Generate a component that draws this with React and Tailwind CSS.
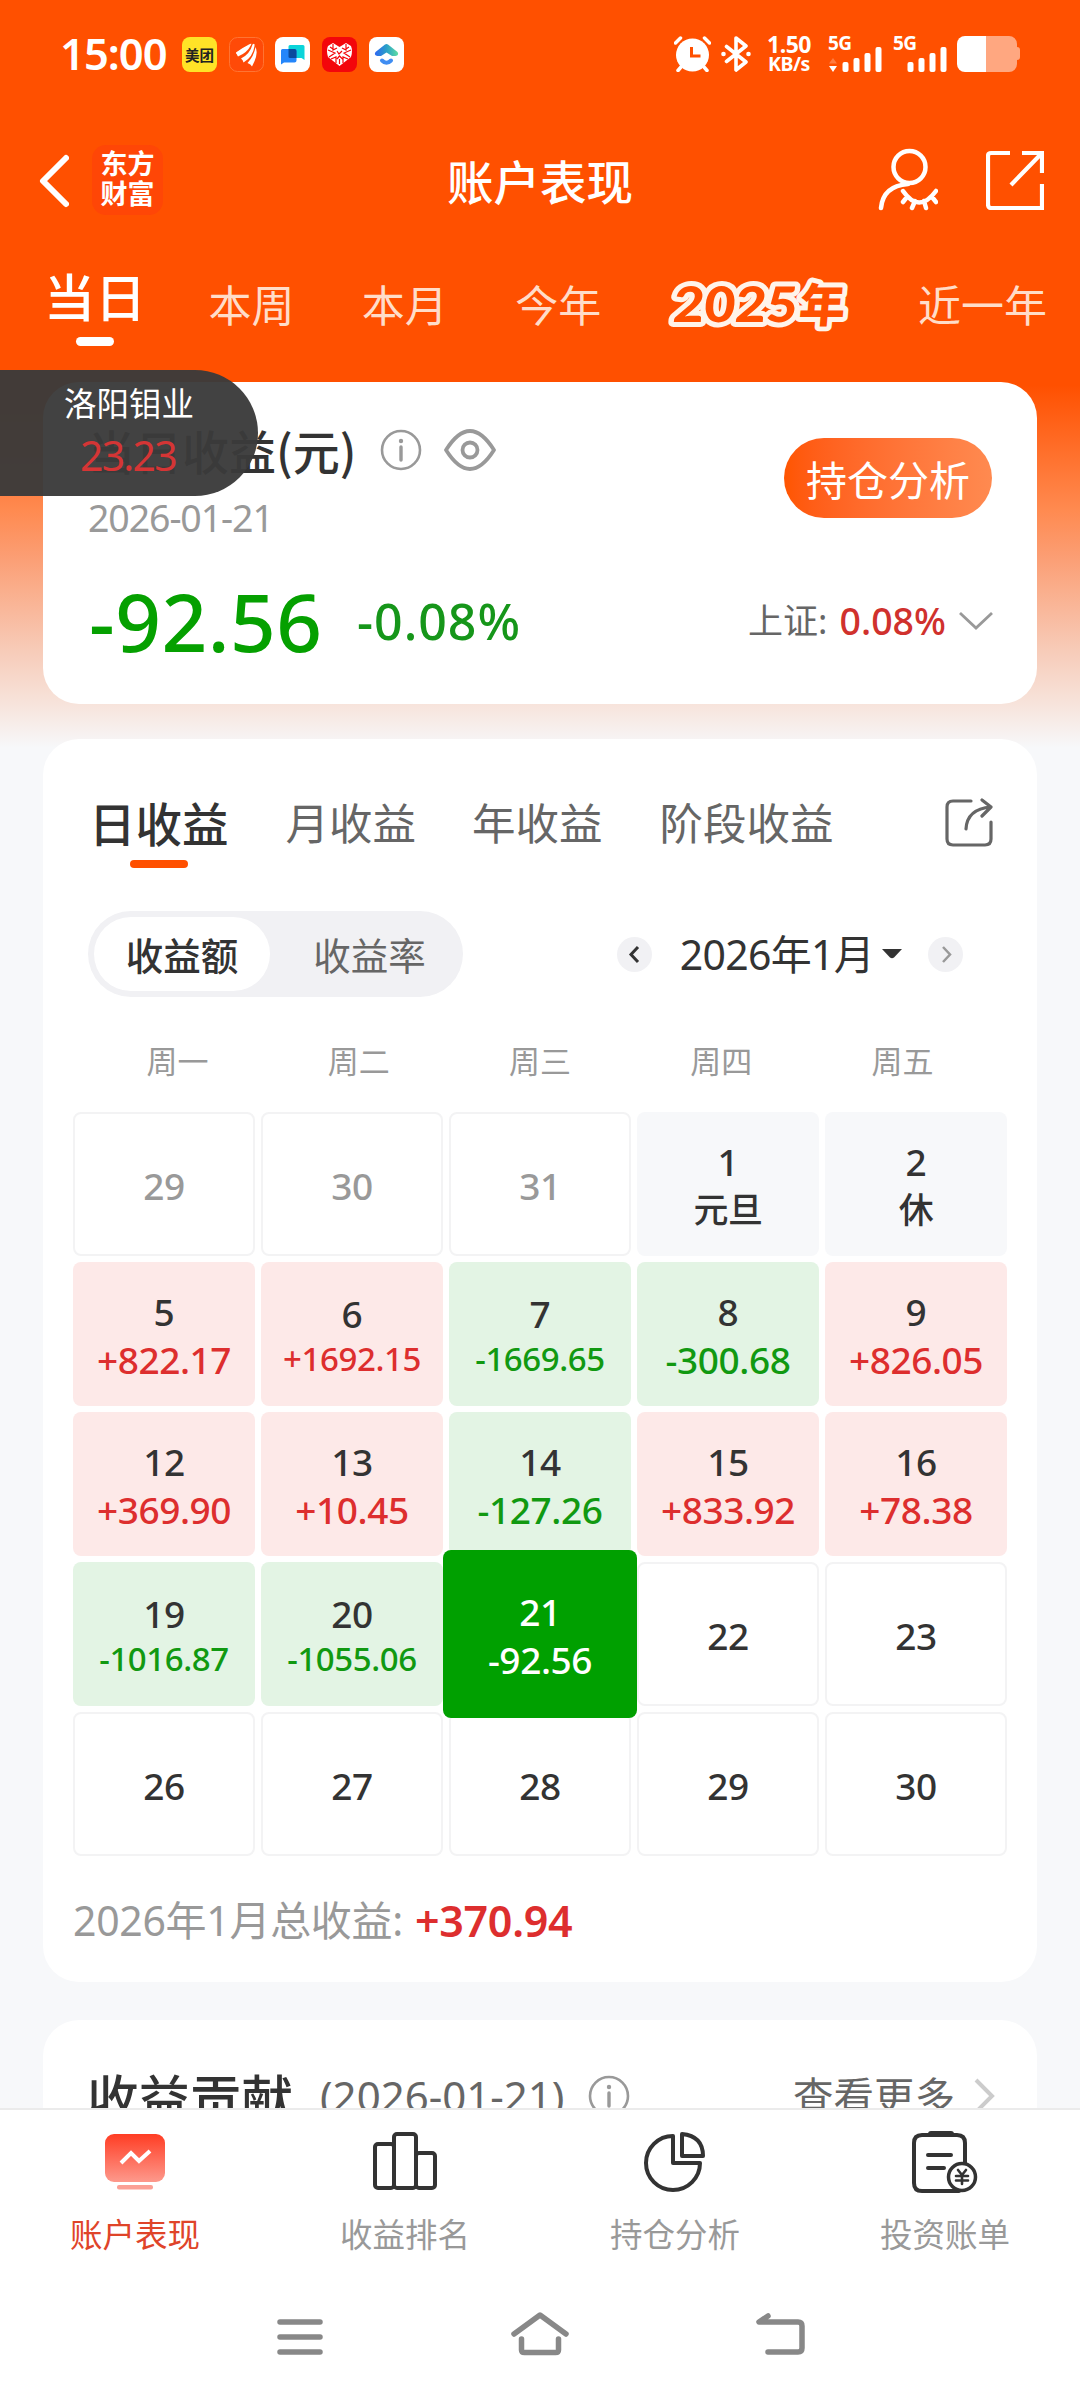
import { useState } from "react";

const days = [
  { day: 29, type: "muted" },
  { day: 30, type: "muted" },
  { day: 31, type: "muted" },
  { day: 1, type: "holiday", note: "元旦" },
  { day: 2, type: "holiday", note: "休" },
  { day: 5, type: "up", note: "+822.17" },
  { day: 6, type: "up", note: "+1692.15" },
  { day: 7, type: "down", note: "-1669.65" },
  { day: 8, type: "down", note: "-300.68" },
  { day: 9, type: "up", note: "+826.05" },
  { day: 12, type: "up", note: "+369.90" },
  { day: 13, type: "up", note: "+10.45" },
  { day: 14, type: "down", note: "-127.26" },
  { day: 15, type: "up", note: "+833.92" },
  { day: 16, type: "up", note: "+78.38" },
  { day: 19, type: "down", note: "-1016.87" },
  { day: 20, type: "down", note: "-1055.06" },
  { day: 21, type: "active", note: "-92.56" },
  { day: 22, type: "empty" },
  { day: 23, type: "empty" },
  { day: 26, type: "empty" },
  { day: 27, type: "empty" },
  { day: 28, type: "empty" },
  { day: 29, type: "empty" },
  { day: 30, type: "empty" },
];

const cellStyles = {
  muted: "border-2 border-[#f3f3f4] text-[#999]",
  holiday: "bg-[#f7f8fa] text-[#333]",
  up: "bg-[#fde9e8] text-[#333]",
  down: "bg-[#e3f4e4] text-[#333]",
  active: "bg-[#00a000] text-white z-10 -mx-[6px] -my-3",
  empty: "border-2 border-[#f3f3f4] text-[#333]",
};

const noteStyles = {
  holiday: "text-[#333]",
  up: "text-[#dd2e2e]",
  down: "text-[#119911]",
  active: "text-white",
};

const InfoIcon = () => (
  <svg width="42" height="42" viewBox="0 0 42 42" fill="none" stroke="#999" strokeWidth="2.6">
    <circle cx="21" cy="21" r="19" />
    <circle cx="21" cy="12" r="2.2" fill="#999" stroke="none" />
    <path d="M21 18v13" strokeWidth="3.4" strokeLinecap="round" />
  </svg>
);

const Signal = ({ arrows }) => (
  <div className="relative w-[55px] h-9">
    <span className="absolute left-0 top-0 text-[19px] leading-[15px] font-bold tracking-[-0.5px]">5G</span>
    <svg className="absolute inset-0" width="55" height="36" fill="#fff">
      {arrows && (
        <>
          <path d="M1 27.5L5 22l4 5.500z" opacity=".25" />
          <path d="M1 30h8l-4 6z" />
        </>
      )}
      <rect x="14.500" y="26" width="6" height="10" rx="2" />
      <rect x="25.500" y="22" width="6" height="14" rx="2" />
      <rect x="36.500" y="17" width="6" height="19" rx="2" />
      <rect x="47.500" y="11" width="6" height="25" rx="2" />
    </svg>
  </div>
);

const StatusBar = () => (
  <div className="flex items-center shrink-0 h-[72px] pt-9 pl-[60px] pr-[60px] text-white">
    <span className="w-[122px] text-[43.500px] leading-[34px] -mt-[2px] font-semibold tracking-[-1px] font-['Noto_Sans']">15:00</span>
    <div className="flex gap-[11.700px]">
      <div className="size-[35px] rounded-[8px] bg-[#ffe327] text-[#222] text-[14.500px] leading-[35px] font-bold text-center">美团</div>
      <svg width="35" height="35" viewBox="0 0 35 35">
        <rect x=".5" y=".5" width="34" height="34" rx="8" fill="#ff4a08" stroke="#ff7433" />
        <g fill="#fff">
          <path d="M7 17C13 14 18 11 23 6.500Q18 9 7.500 15.500Z" />
          <path d="M7 15.500Q13 11 20 7.500Q23 6 22 8Q18 16 9 19.500Q8 18 7 15.500Z" />
          <path d="M12 21.500Q21 17 23.500 7.500Q26 5.500 25.500 9Q24 20 14.500 25.500Q14 23 12 21.500Z" />
          <path d="M18.500 26Q25 19 26.500 10Q30 17 23 29.500Q22 27 18.500 26Z" />
        </g>
      </svg>
      <svg width="35" height="35" viewBox="0 0 35 35">
        <rect width="35" height="35" rx="8" fill="#fff" />
        <path d="M15 8h13a1.500 1.500 0 0 1 1.500 1.500V23l-3-2H15a1.500 1.500 0 0 1-1.500-1.500v-10A1.500 1.500 0 0 1 15 8Z" fill="#0bd4da" />
        <path d="M7.500 12h12A2 2 0 0 1 21.500 14v9.500a2 2 0 0 1-2 2H9l-3 2V13.500A1.500 1.500 0 0 1 7.500 12Z" fill="#2486fb" />
        <path d="M13.500 12h6a2 2 0 0 1 2 2v7H15a1.500 1.500 0 0 1-1.500-1.500Z" fill="#0a4a9e" />
      </svg>
      <svg width="35" height="35" viewBox="0 0 35 35">
        <rect width="35" height="35" rx="8" fill="#f3060b" />
        <path d="M17.500 29L6 20Q4 13 6 9L11 6l6.500 4L24 6l5 3q2 5 0 11Z" fill="#fff" />
        <path d="M6 13l7 3-6 4M29 13l-7 3 6 4M11 7v6l4-2M24 7v6l-4-2M9 22l5-2v6M26 22l-5-2v6M15 14l2 3 3-3M15 22l2.500-3 3 3M17.500 22v5M8 10l3 2M27 10l-3 2" stroke="#f3060b" strokeWidth="1.200" fill="none" />
      </svg>
      <svg width="35" height="35" viewBox="0 0 35 35">
        <defs>
          <linearGradient id="roof" gradientUnits="userSpaceOnUse" x1="5" y1="0" x2="30" y2="0">
            <stop offset="0" stopColor="#2f62f5" />
            <stop offset=".5" stopColor="#2aa0c8" />
            <stop offset="1" stopColor="#62e2a0" />
          </linearGradient>
        </defs>
        <rect width="35" height="35" rx="8" fill="#fff" />
        <path d="M16 7.500q1.500-1 3 0L28.500 15q2 3-2 4h-3.500l-5.500-3.500L12 19H8.500q-4-1-2-4Z" fill="url(#roof)" />
        <path d="M13 23.500q4.500 4.500 9 0" stroke="#3f8df2" strokeWidth="4" strokeLinecap="round" fill="none" />
      </svg>
    </div>
    <div className="flex ml-auto h-9">
      <svg width="37" height="36" viewBox="0 0 37 36">
        <circle cx="18.500" cy="19" r="16.500" fill="#fff" />
        <path d="M1.500 7l5-5M35.500 7l-5-5" stroke="#fff" strokeWidth="3.500" strokeLinecap="round" />
        <path d="M7 31l-3 3.500M30 31l3 3.500" stroke="#fff" strokeWidth="3.500" strokeLinecap="round" />
        <path d="M17.500 11v9h9" stroke="#ff5000" strokeWidth="3" fill="none" />
      </svg>
      <svg className="ml-[10px]" width="30" height="36" viewBox="0 0 30 36" fill="none" stroke="#fff" strokeWidth="3.600" strokeLinejoin="round" strokeLinecap="round">
        <path d="M5.500 10.500L25 26l-10 8V2l10 8L5.500 25.500" />
        <circle cx="2.500" cy="18" r="2.300" fill="#fff" stroke="none" />
        <circle cx="27.500" cy="18" r="2.300" fill="#fff" stroke="none" />
      </svg>
      <div className="ml-[15px] w-[46px] text-center leading-[20px] font-bold font-['Noto_Sans']">
        <p className="text-[23px] -mt-[2px] tracking-[-0.5px]">1.50</p>
        <p className="text-[19.500px] tracking-[-0.500px]">KB/s</p>
      </div>
      <div className="flex ml-[16px] gap-[10px] font-['Noto_Sans']">
        <Signal arrows />
        <Signal />
      </div>
      <svg className="ml-[9px]" width="63" height="36" viewBox="0 0 63 36">
        <path d="M29 0h23a8 8 0 0 1 8 8v3q3 0 3 3v7q0 3-3 3v4a8 8 0 0 1-8 8H29z" fill="#ffa780" />
        <path d="M8 0h21v36H8a8 8 0 0 1-8-8V8a8 8 0 0 1 8-8z" fill="#fff" />
      </svg>
    </div>
  </div>
);

const Header = () => (
  <div className="relative flex items-center shrink-0 h-[70px] mt-[73px] pl-[39px] pr-9 text-white">
    <svg className="mt-[2px]" width="30" height="54" viewBox="0 0 30 54" fill="none" stroke="#fff" strokeWidth="6" strokeLinecap="round" strokeLinejoin="round">
      <path d="M27 4L4 27l23 23" />
    </svg>
    <div className="ml-[23px] w-[71px] h-[70px] rounded-[14px] bg-[#ff4606] text-[27px] leading-[30px] pt-[3px] text-center font-bold">
      <p>东方</p>
      <p>财富</p>
    </div>
    <h1 className="absolute inset-x-0 top-0 text-center text-[46.500px] leading-[69px] font-medium">账户表现</h1>
    <svg className="ml-auto" width="60" height="64" viewBox="0 0 60 64" fill="none" stroke="#fff" strokeWidth="4.500" strokeLinecap="round">
      <circle cx="31.500" cy="19" r="16" />
      <path d="M30 36Q5 38 3 60M25 43q16 23 33 0M29 49l-4 5M37 53l-3 7M46 53l2 7M54 49l4 5" />
    </svg>
    <svg className="ml-12" width="58" height="60" viewBox="0 0 58 60" fill="none" stroke="#fff" strokeWidth="4.200">
      <path d="M24 3H5q-3 0-3 3v48q0 4 3 4h51V34M36 3h20v20M55 4L25 35" />
    </svg>
  </div>
);

const periods = ["当日", "本周", "本月", "今年", "2025年", "近一年"];

const PeriodTabs = () => (
  <div className="flex items-start justify-between shrink-0 h-[112px] mt-[55px] pl-[44px] pr-[33px] text-[43px] leading-[67px] text-[#ffddc9]">
    {periods.map((p, i) => {
      if (i === 0) {
        return (
          <div key={p} className="flex flex-col items-center -mr-[5px] text-white text-[51px] leading-[50px] font-medium">
            {p}
            <span className="w-[38px] h-[9px] mt-[17px] rounded-full bg-white" />
          </div>
        );
      }
      if (p === "2025年") {
        return (
          <svg key={p} className="mt-[6px] -mx-[2px] overflow-visible" width="186" height="60" viewBox="0 0 186 60">
            <g transform="skewX(-5)" fontWeight="900" fill="#ff5000" stroke="#fff4ea" strokeWidth="10" strokeLinejoin="round" paintOrder="stroke">
              <text x="9" y="46" textLength="124" lengthAdjust="spacingAndGlyphs" fontSize="49" className="font-[Lato]">2025</text>
              <text x="135" y="46" fontSize="46" className="font-['Noto_Sans_CJK_SC',sans-serif]">年</text>
            </g>
          </svg>
        );
      }
      return <span key={p}>{p}</span>;
    })}
  </div>
);

const Summary = () => (
  <div className="flex flex-col shrink-0 h-[322px] mx-[43px] rounded-[36px] bg-white">
    <div className="flex pl-[45px] pr-[45px] h-[176px] pt-11">
      <div>
        <div className="flex items-center h-[48px]">
          <h2 className="text-[47px] leading-[48px] font-medium text-[#333] whitespace-nowrap">当日收益(元)</h2>
          <span className="ml-[24px] -mt-px"><InfoIcon /></span>
          <svg className="ml-[22px]" width="52" height="42" viewBox="0 0 52 42" fill="none" stroke="#999" strokeWidth="3.800">
            <path d="M2 21Q14 2 26 2t24 19Q38 40 26 40T2 21Z" strokeLinejoin="round" />
            <circle cx="26" cy="21" r="7.500" />
          </svg>
        </div>
        <p className="mt-[24px] text-[37.500px] leading-[40px] text-[#999] font-['Noto_Sans'] tracking-[-1.100px]">2026-01-21</p>
      </div>
      <button className="ml-auto mt-3 w-[208px] h-20 rounded-full bg-linear-to-r from-[#ff5500] to-[#ff8a50] text-white text-[41px] leading-[79px]">持仓分析</button>
    </div>
    <div className="flex items-center h-[126px] pl-[46px] pr-[43px] font-['Noto_Sans','Noto_Sans_CJK_SC',sans-serif]">
      <span className="text-[80px] leading-[100px] font-medium text-[#05a000] tracking-[0.500px] w-[268px]">-92.56</span>
      <span className="text-[50px] font-medium text-[#16961a] tracking-[1px]">-0.08%</span>
      <span className="ml-auto text-[35px] text-[#666]">上证:</span>
      <span className="ml-3 text-[37.500px] font-medium text-[#d0312d]">0.08%</span>
      <svg className="ml-3" width="36" height="20" viewBox="0 0 36 20" fill="none" stroke="#999" strokeWidth="2.800">
        <path d="M2 2l16 15L34 2" />
      </svg>
    </div>
  </div>
);

const Cell = ({ item }) => {
  const small = item.note && item.note.length > 7;
  return (
    <div className={`relative flex flex-col items-center justify-center rounded-[8px] pt-[3px] text-[37px] leading-[48px] font-medium ${cellStyles[item.type]}`}>
      <span className={small ? "leading-[44px] pt-[3px]" : ""}>{item.day}</span>
      {item.note && (
        <span className={`${noteStyles[item.type]} ${small ? "text-[33px] leading-[46px]" : item.type === "holiday" ? "text-[35px]" : ""}`}>
          {item.note}
        </span>
      )}
    </div>
  );
};

const Calendar = () => {
  const [mode, setMode] = useState("amount");

  return (
    <div className="shrink-0 h-[1243px] mt-[35px] mx-[43px] rounded-[36px] bg-white">
      {/* Range tabs */}
      <div className="flex items-start h-[172px] pt-[53px] pl-[46px] pr-[43px] text-[43.500px] leading-[60px] text-[#666]">
        <div className="flex flex-col items-center text-[46.500px] font-medium text-[#333]">
          日收益
          <span className="w-[58px] h-2 mt-[8px] rounded-full bg-[#ff5000]" />
        </div>
        <span className="ml-[57px]">月收益</span>
        <span className="ml-[56px]">年收益</span>
        <span className="ml-[57px]">阶段收益</span>
        <svg className="ml-auto mt-[6px]" width="49" height="50" viewBox="0 0 49 50" fill="none" stroke="#666" strokeWidth="3.200" strokeLinecap="round" strokeLinejoin="round">
          <path d="M26 3H8Q2 3 2 9v32q0 6 6 6h32q6 0 6-6V24M21 31Q22 11 46 9M37 2l9 7-9 9" />
        </svg>
      </div>

      {/* Mode switch + month picker */}
      <div className="flex items-center h-[86px] pl-[45px] pr-[74px]">
        <div className="flex items-center w-[375px] h-[86px] p-[6px] rounded-full bg-[#f1f1f4] text-[37.500px] text-[#666]">
          <button onClick={() => setMode("amount")} className={`w-[176px] h-[74px] rounded-full ${mode === "amount" ? "bg-white text-[#333] font-medium" : ""}`}>
            收益额
          </button>
          <button onClick={() => setMode("rate")} className={`flex-1 pl-3 h-[74px] rounded-full ${mode === "rate" ? "bg-white text-[#333] font-medium" : ""}`}>
            收益率
          </button>
        </div>
        <svg className="ml-auto" width="35" height="35" viewBox="0 0 35 35" fill="none">
          <circle cx="17.500" cy="17.500" r="17.500" fill="#f1f1f4" />
          <path d="M21 10l-7 7.500 7 7.500" stroke="#333" strokeWidth="3" />
        </svg>
        <span className="ml-7 mt-[2px] text-[41px] text-[#333] tracking-[-0.700px] font-['Noto_Sans','Noto_Sans_CJK_SC',sans-serif]">2026年1月</span>
        <svg className="ml-[8px]" width="20" height="10" viewBox="0 0 20 10" fill="#333">
          <path d="M0 0h20l-8 8.500q-2 1.500-4 0z" />
        </svg>
        <svg className="ml-[26px]" width="35" height="35" viewBox="0 0 35 35" fill="none">
          <circle cx="17.500" cy="17.500" r="17.500" fill="#f1f1f4" />
          <path d="M15 10l7 7.500-7 7.500" stroke="#999" strokeWidth="2.500" />
        </svg>
      </div>

      <div className="grid grid-cols-5 h-[115px] px-[44px] pt-[33px] text-center text-[31px] leading-[60px] text-[#999]">
        <span>周一</span>
        <span>周二</span>
        <span>周三</span>
        <span>周四</span>
        <span>周五</span>
      </div>

      <div className="grid grid-cols-5 auto-rows-[144px] gap-[6px] mx-[30px] font-['Noto_Sans','Noto_Sans_CJK_SC',sans-serif] tracking-[-0.400px]">
        {days.map((item, i) => (
          <Cell key={i} item={item} />
        ))}
      </div>

      <div className="flex items-center pl-[30px] mt-[35px] h-[60px] text-[41px] text-[#999] font-['Noto_Sans','Noto_Sans_CJK_SC',sans-serif]">
        <span className="tracking-[-0.300px]">2026年1月总收益:</span>
        <span className="ml-3 font-semibold text-[#dd2e2e] text-[43px] tracking-[-0.300px]">+370.94</span>
      </div>
    </div>
  );
};

const Contribution = () => (
  <div className="flex items-center shrink-0 mt-[38px] mx-[43px] rounded-t-[36px] bg-white h-[151px] pl-[44px] pr-[40px]">
    <h2 className="text-[51.500px] font-medium text-[#333]">收益贡献</h2>
    <span className="ml-[27px] text-[42px] text-[#666] font-['Noto_Sans']">(2026-01-21)</span>
    <span className="ml-6"><InfoIcon /></span>
    <span className="ml-auto text-[40.500px] text-[#666]">查看更多</span>
    <svg className="ml-[18px]" width="24" height="40" viewBox="0 0 24 40" fill="none" stroke="#ccc" strokeWidth="4">
      <path d="M3 4l16 16L3 36" />
    </svg>
  </div>
);

const navItems = [
  {
    label: "账户表现",
    icon: (
      <svg width="66" height="66" viewBox="0 0 66 66" fill="none">
        <defs>
          <linearGradient id="screen" x1="0" y1="0" x2="0" y2="1">
            <stop offset="0" stopColor="#ff3d24" />
            <stop offset="1" stopColor="#fd998c" />
          </linearGradient>
        </defs>
        <rect x="3" y="5" width="60" height="48" rx="9" fill="url(#screen)" />
        <path d="M19 34l10-10 8 8 11-10" stroke="#fff" strokeWidth="4" />
        <rect x="15" y="56" width="36" height="4.500" rx="2" fill="#fba095" />
      </svg>
    ),
  },
  {
    label: "收益排名",
    icon: (
      <svg width="66" height="66" viewBox="0 0 66 66" fill="none" stroke="#333" strokeWidth="4">
        <rect x="3" y="15" width="19" height="44" rx="3" />
        <rect x="22" y="5" width="22" height="54" rx="3" />
        <rect x="44" y="24" width="19" height="35" rx="3" />
      </svg>
    ),
  },
  {
    label: "持仓分析",
    icon: (
      <svg width="66" height="66" viewBox="0 0 66 66" fill="none" stroke="#333" strokeWidth="4" strokeLinejoin="round">
        <path d="M31 7A27 27 0 1 0 58 34H31Z" />
        <path d="M40 5Q61 7 61 27H40Z" />
      </svg>
    ),
  },
  {
    label: "投资账单",
    icon: (
      <svg width="66" height="66" viewBox="0 0 66 66" fill="none" stroke="#333" strokeWidth="4" strokeLinecap="round">
        <path d="M47 62H10q-8 0-8-8V14q0-8 8-8h35q8 0 8 8v20" />
        <path d="M19 5h20" strokeWidth="6" />
        <path d="M16 26h23M16 39h16" />
        <circle cx="50" cy="48" r="13.500" fill="#fff" strokeWidth="3.500" />
        <path d="M46 41l4 5 4-5M50 46v9M44 47h12M44 51.500h12" strokeWidth="2.600" />
      </svg>
    ),
  },
];

const App = () => {
  return (
    <div className="relative flex flex-col w-[1080px] h-[2400px] overflow-hidden bg-[#f7f8fa] font-['Noto_Sans_CJK_SC',sans-serif]">
      <div className="flex flex-col shrink-0 h-[2108px] overflow-hidden bg-[linear-gradient(180deg,#ff5000_0,#ff5000_385px,#ff8a50_510px,#fb9f76_560px,#faae8c_590px,#f7cbb8_650px,#f7e4dc_705px,#f7f8fa_748px)]">
        <StatusBar />
        <Header />
        <PeriodTabs />
        <Summary />
        <Calendar />
        <Contribution />
      </div>

      {/* Bottom navigation */}
      <div className="flex h-[166px] border-t-2 border-[#ebebeb] bg-white">
        {navItems.map((item, i) => (
          <div key={item.label} className="flex flex-1 flex-col items-center pt-[19px]">
            {item.icon}
            <span className={`mt-[14px] text-[32.500px] leading-[48px] ${i === 0 ? "text-[#df4429]" : "text-[#999]"}`}>{item.label}</span>
          </div>
        ))}
      </div>

      {/* System navigation */}
      <div className="flex flex-1 items-start justify-between bg-white pt-[37px] pl-[276px] pr-[275px]">
        <svg width="48" height="46" viewBox="0 0 48 46" stroke="#888" strokeWidth="5.500" strokeLinecap="round">
          <path d="M4 11h40M4 26h40M4 41h40" />
        </svg>
        <svg width="60" height="46" viewBox="0 0 60 46" fill="none" stroke="#888" strokeWidth="5.500" strokeLinecap="round" strokeLinejoin="round">
          <path d="M4 23L30 4l26 19M11.500 28v11q0 2.500 3 2.500h31q3 0 3-2.500V28" />
        </svg>
        <svg width="50" height="46" viewBox="0 0 50 46" fill="none" stroke="#888" strokeWidth="5.500" strokeLinecap="round" strokeLinejoin="round">
          <path d="M13 5L4 11h39q4 0 4 4v22q0 4-4 4H13" />
        </svg>
      </div>

      {/* Floating quote */}
      <div className="absolute left-0 top-[370px] w-[258px] h-[126px] pt-[9px] rounded-r-full bg-[#3a3a3a]/96 z-20">
        <p className="pl-[64px] text-[32.500px] leading-[46px] text-white">洛阳钼业</p>
        <p className="pl-[80px] mt-[6px] text-[41px] leading-[48px] text-[#d53535] font-['Noto_Sans'] tracking-[-1.800px]">23.23</p>
      </div>
    </div>
  );
};

export default App;
